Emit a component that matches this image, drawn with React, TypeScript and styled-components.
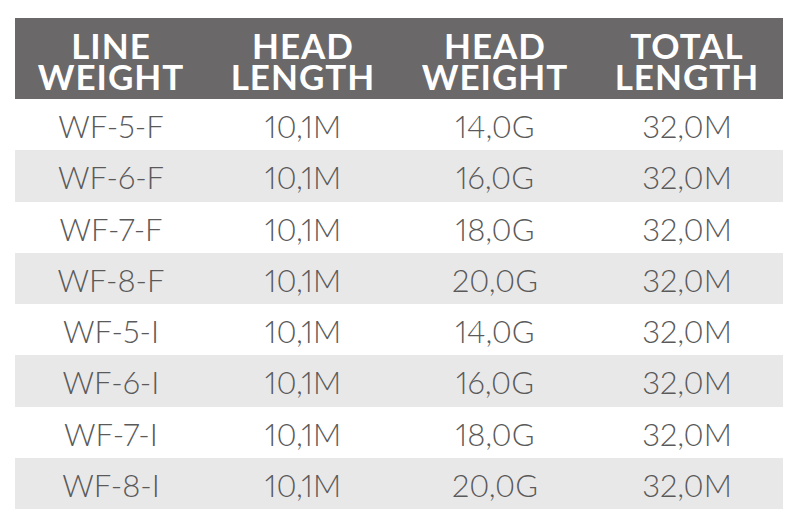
import React from 'react';
import styled, { createGlobalStyle } from 'styled-components';

const GlobalStyle = createGlobalStyle`
  html, body {
    margin: 0;
    padding: 0;
    background: #ffffff;
  }
`;

const Page = styled.div`
  padding: 18px 18px 20px 15px;
`;

const Table = styled.div`
  width: 768px;
  font-family: Lato, 'Liberation Sans', sans-serif;
`;

const HeaderRow = styled.div`
  display: grid;
  grid-template-columns: repeat(4, 1fr);
  height: 81px;
  background: #6a6869;
`;

const HeaderCell = styled.div`
  display: flex;
  align-items: center;
  justify-content: center;
  padding-top: 4px;
  color: #ffffff;
  font-weight: 700;
  font-size: 35px;
  line-height: 31px;
  letter-spacing: 1px;
  text-align: center;
  text-transform: uppercase;
  white-space: pre-line;
`;

const Row = styled.div<{ $shaded: boolean }>`
  display: grid;
  grid-template-columns: repeat(4, 1fr);
  height: 51.25px;
  background: ${({ $shaded }) => ($shaded ? '#e9e8e9' : '#ffffff')};
`;

const Cell = styled.div`
  display: flex;
  align-items: center;
  justify-content: center;
  padding-top: 3px;
  color: #5a5a5a;
  font-weight: 300;
  font-size: 31px;
  font-variant-numeric: proportional-nums;
`;

const headers = ['Line\nWeight', 'Head\nLength', 'Head\nWeight', 'Total\nLength'];

const rows = [
  ['WF-5-F', '10,1M', '14,0G', '32,0M'],
  ['WF-6-F', '10,1M', '16,0G', '32,0M'],
  ['WF-7-F', '10,1M', '18,0G', '32,0M'],
  ['WF-8-F', '10,1M', '20,0G', '32,0M'],
  ['WF-5-I', '10,1M', '14,0G', '32,0M'],
  ['WF-6-I', '10,1M', '16,0G', '32,0M'],
  ['WF-7-I', '10,1M', '18,0G', '32,0M'],
  ['WF-8-I', '10,1M', '20,0G', '32,0M'],
];

const App: React.FC = () => (
  <>
    <GlobalStyle />
    <Page>
      <Table>
        <HeaderRow>
          {headers.map((label) => (
            <HeaderCell key={label}>{label}</HeaderCell>
          ))}
        </HeaderRow>
        {rows.map((row, i) => (
          <Row key={row[0]} $shaded={i % 2 === 1}>
            {row.map((value, j) => (
              <Cell key={j}>{value}</Cell>
            ))}
          </Row>
        ))}
      </Table>
    </Page>
  </>
);

export default App;
